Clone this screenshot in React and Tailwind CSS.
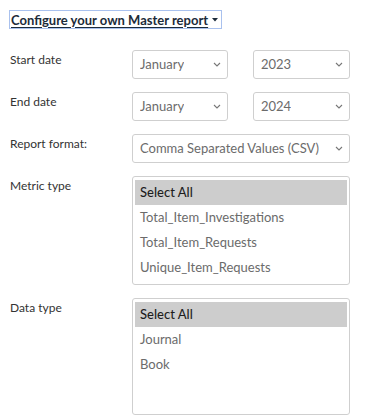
import React from 'react';

const font = { fontFamily: '"Lato", "Liberation Sans", sans-serif' };

function Chevron() {
  return (
    <svg width="8" height="5" viewBox="0 0 8 5" className="shrink-0">
      <path d="M1 1 L4 4 L7 1" fill="none" stroke="#777" strokeWidth="1.1" />
    </svg>
  );
}

function Dropdown({ value, className }) {
  return (
    <div className={`h-[29px] flex items-center justify-between pl-[7px] pr-[6px] border border-[#cfcfcf] rounded-[3px] bg-white text-[13px] text-[#6b6b6b] ${className}`}>
      <span className="truncate">{value}</span>
      <Chevron />
    </div>
  );
}

function ListBox({ items, height }) {
  return (
    <div className={`border border-[#cfcfcf] rounded-[3px] bg-white px-[2px] pt-[3px] ${height}`}>
      {items.map((item, i) => (
        <div
          key={item}
          className={`h-[25px] flex items-center pl-[5px] text-[13px] ${i === 0 ? 'bg-[#cdcdcd] text-[#1e1e1e] font-medium' : 'text-[#6b6b6b]'}`}
        >
          {item}
        </div>
      ))}
    </div>
  );
}

function Row({ label, children }) {
  return (
    <div className="grid grid-cols-[122px_218px]">
      <div className="text-[12px] text-[#333] pt-[2px] leading-[16px]">{label}</div>
      <div>{children}</div>
    </div>
  );
}

export default function App() {
  return (
    <div className="w-[367px] h-[415px] overflow-hidden bg-white pl-[10px] pt-[10px]" style={font}>
      <div className="flex">
        <div className="flex items-center h-[19px] ml-[-1px] pl-[1px] pr-[3px] border border-[#a9c1ee]">
          <span className="font-bold text-[13px] leading-[16px] text-[#1c2b3a] underline underline-offset-2">
            Configure your own Master report
          </span>
          <svg width="6" height="4" viewBox="0 0 6 4" className="ml-[4px]">
            <path d="M0 0 H6 L3 3.5 Z" fill="#1c2b3a" />
          </svg>
        </div>
      </div>

      <div className="mt-[21px] flex flex-col gap-[13px]">
        <Row label="Start date">
          <div className="flex gap-[25px]">
            <Dropdown value="January" className="w-[96px]" />
            <Dropdown value="2023" className="w-[97px]" />
          </div>
        </Row>
        <Row label="End date">
          <div className="flex gap-[25px]">
            <Dropdown value="January" className="w-[96px]" />
            <Dropdown value="2024" className="w-[97px]" />
          </div>
        </Row>
        <Row label="Report format:">
          <Dropdown value="Comma Separated Values (CSV)" className="w-[218px]" />
        </Row>
        <Row label="Metric type">
          <ListBox
            height="h-[109px]"
            items={['Select All', 'Total_Item_Investigations', 'Total_Item_Requests', 'Unique_Item_Requests']}
          />
        </Row>
        <Row label="Data type">
          <ListBox height="h-[117px]" items={['Select All', 'Journal', 'Book']} />
        </Row>
      </div>
    </div>
  );
}
